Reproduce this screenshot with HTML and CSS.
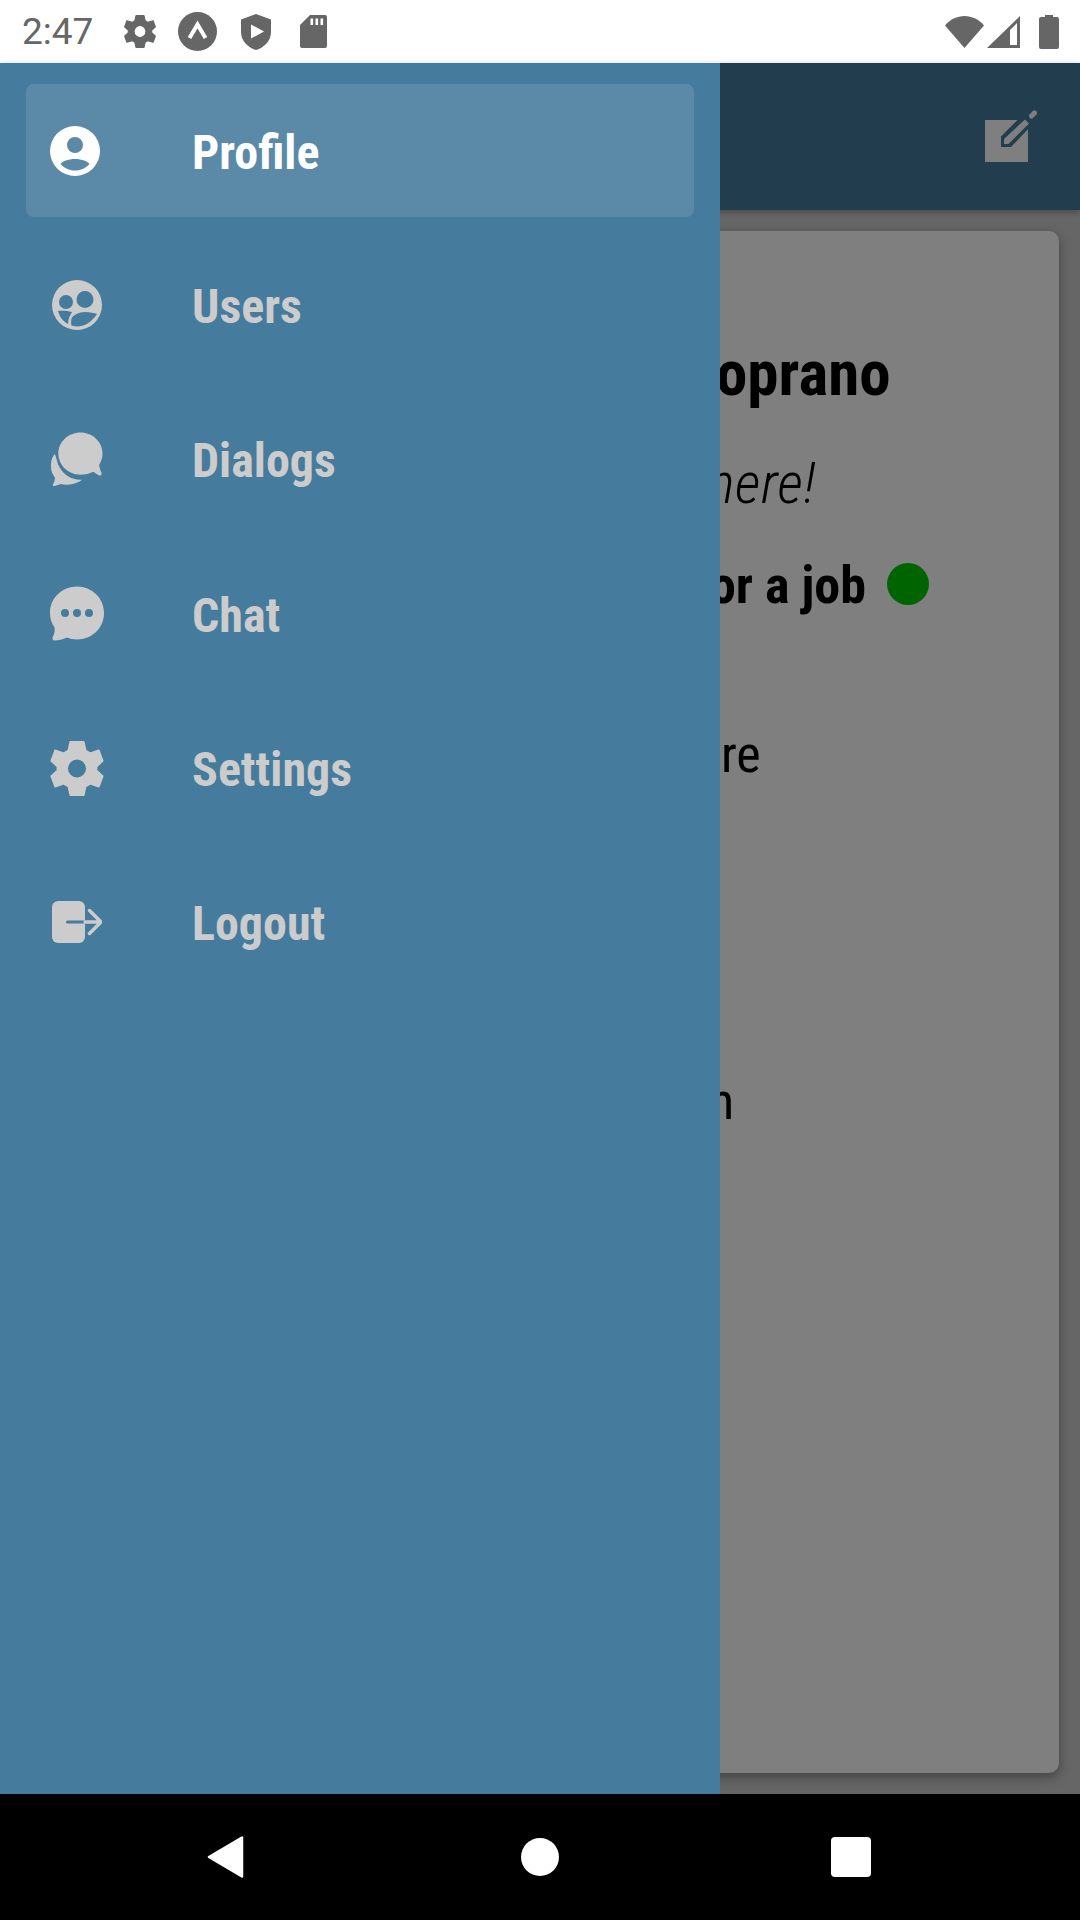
FILE: index.html
```html
<!DOCTYPE html>
<html lang="en">
<head>
<meta charset="utf-8">
<title>Profile</title>
<link rel="stylesheet" href="styles.css">
</head>
<body>
<div class="app">
  <header class="status">
    <span class="time">2:47</span>
    <div class="status-left">
      <svg class="si gear-s" viewBox="-1 -1 56 58"><use href="#gear"/></svg>
      <svg class="si a-s" viewBox="0 0 39 39"><circle cx="19.5" cy="19.5" r="19.5" fill="#666"/><path d="M11.5 26 19.5 12.5 27.5 26" fill="none" stroke="#fff" stroke-width="4"/></svg>
      <svg class="si sh-s" viewBox="0 0 30 36"><path d="M15 0 30 5.500V18C30 27 23 33.500 15 36 7 33.500 0 27 0 18V5.500Z" fill="#666"/><path d="M10 10.500 23 17.500 10 24.500Z" fill="#fff"/></svg>
      <svg class="si sd-s" viewBox="0 0 27 33"><path d="M10 0H25A2 2 0 0 1 27 2V31A2 2 0 0 1 25 33H2A2 2 0 0 1 0 31V10Z" fill="#666"/><path d="M10.500 3.500h2.600v6.500h-2.600zM15.500 3.500h2.600v6.500h-2.600zM20.500 3.500h2.600v6.500h-2.600z" fill="#fff"/></svg>
    </div>
    <div class="status-right">
      <svg class="si wifi-s" viewBox="0 0 39 32"><path d="M19.500 32 0 9.500C5 3.500 12 0 19.500 0S34 3.500 39 9.500Z" fill="#666"/></svg>
      <svg class="si sig-s" viewBox="0 0 33 32"><path fill-rule="evenodd" d="M33 0V32H0ZM30 7 23 14V29H30Z" fill="#666"/></svg>
      <svg class="si bat-s" viewBox="0 0 20 34"><path d="M6 0H14V2H18A2 2 0 0 1 20 4V32A2 2 0 0 1 18 34H2A2 2 0 0 1 0 32V4A2 2 0 0 1 2 2H6Z" fill="#666"/></svg>
    </div>
  </header>

  <main class="main">
    <div class="topbar">
      <svg class="edit" viewBox="0 0 52 52"><path d="M0 9H43V51H0Z" fill="#fff"/><path d="M16 36V25.500L38 3.500 48 13 26 36Z" fill="#457b9d"/><path d="M19 33V28L40 8.500 44 12.500 23.500 33Z" fill="#fff"/><path d="M46.500 5 49.500 2" stroke="#fff" stroke-width="5" stroke-linecap="round"/></svg>
    </div>
    <div class="content">
      <section class="card">
        <h1 class="name">oprano</h1>
        <p class="quote">here!</p>
        <p class="job">or a job <span class="dot"></span></p>
        <p class="line line-a">re</p>
        <p class="line line-b">n</p>
      </section>
    </div>
    <div class="scrim"></div>
    <nav class="drawer">
      <a class="item active">
        <svg class="ico" viewBox="0 0 50 50"><path fill-rule="evenodd" d="M25 0a25 25 0 1 1 0 50 25 25 0 0 1 0-50ZM25 11a8 8 0 1 0 0 16 8 8 0 0 0 0-16ZM25 33C18 33 12 35.500 10.500 38 14 42 19 44.500 25 44.500S36 42 39.500 38C38 35.500 32 33 25 33Z"/></svg>
        <span>Profile</span>
      </a>
      <a class="item">
        <svg class="ico shift" viewBox="0 0 50 50"><path fill-rule="evenodd" d="M25 0a25 25 0 1 1 0 50 25 25 0 0 1 0-50ZM14 15a7 7 0 1 0 0 14 7 7 0 0 0 0-14ZM33 11a8.500 8.500 0 1 0 0 17 8.500 8.500 0 0 0 0-17ZM6 31C8 38 12 42 16 44 16 39 18 35 20 32 16 31 10 30.500 6 31ZM33 32C27 32 21 35 19.500 38.500 19 41 19 44 19.500 45.500 27 48 37 46 45 34 42 33 38 32 33 32Z"/></svg>
        <span>Users</span>
      </a>
      <a class="item">
        <svg class="ico wide" viewBox="0 0 55 55"><path d="M31 0C43.500 0 53.500 9.500 53.500 21.500 53.500 26 52 30 50 33 50.500 36 51.500 39 52.500 41 53 43.500 51.500 44.500 49.500 43.500L44 40C40 42 36 43 31 43 18.500 43 8.500 33.500 8.500 21.500 8.500 9.500 18.500 0 31 0Z"/><path d="M5 22C1 26 1 32 1 35 1 40 3 43 5 46 5 49 4 51 3 52.500 2.500 54 3.500 55 5 54.500L11 52.500C17 54 26 53 33 48 24 49 13 44 8 32 7 28 6 25 5 22Z"/></svg>
        <span>Dialogs</span>
      </a>
      <a class="item">
        <svg class="ico wide" viewBox="0 0 54 54"><path fill-rule="evenodd" d="M27 0C42 0 54 11.500 54 26.500 54 41.500 42 53 27 53 23.500 53 19.500 52 17 51 13 53 8.500 54 5 54 2.500 54 2 52 3 50 4.500 47 5 44 4.500 41 1.500 37 0 32 0 26.500 0 11.500 12 0 27 0ZM15 22.500a4 4 0 1 0 0 8 4 4 0 0 0 0-8ZM27 22.500a4 4 0 1 0 0 8 4 4 0 0 0 0-8ZM39 22.500a4 4 0 1 0 0 8 4 4 0 0 0 0-8Z"/></svg>
        <span>Chat</span>
      </a>
      <a class="item">
        <svg class="ico wide gear-n" viewBox="-1 -1 56 58"><use href="#gear"/></svg>
        <span>Settings</span>
      </a>
      <a class="item">
        <svg class="ico shift" viewBox="0 0 50 42"><path d="M6 0H27A6 6 0 0 1 33 6V36A6 6 0 0 1 27 42H6A6 6 0 0 1 0 36V6A6 6 0 0 1 6 0Z"/><path d="M15.500 21H33" stroke="#457b9d" stroke-width="3" stroke-linecap="round"/><path d="M33 21H48M37.500 9.500 49 21 37.500 32.500" fill="none" stroke="currentColor" stroke-width="3.500" stroke-linecap="round"/></svg>
        <span>Logout</span>
      </a>
    </nav>
  </main>

  <footer class="navbar">
    <svg class="back" viewBox="0 0 37 42"><path d="M35 1.500V40.500L2 21Z" fill="#fff" stroke="#fff" stroke-width="2.500" stroke-linejoin="round"/></svg>
    <span class="home"></span>
    <span class="recent"></span>
  </footer>
</div>
<svg class="defs" width="0" height="0"><defs>
<path id="gear" fill-rule="evenodd" d="M20 0H34L36 9 41 12 50 9 54 20 47.500 26V30L54 36 50 47 41 44 36 47 34 56H20L18 47 13 44 4 47 0 36 6.500 30V26L0 20 4 9 13 12 18 9ZM27 17.500a10.500 10.500 0 1 0 0 21 10.500 10.500 0 0 0 0-21Z"/>
</defs></svg>
</body>
</html>
```
FILE: styles.css
```css
* { box-sizing: border-box; }
html, body { margin: 0; padding: 0; }
body { font-family: Roboto, "Liberation Sans", sans-serif; background: #000; }
.defs { display: block; position: absolute; }
.app { width: 1080px; height: 1920px; display: flex; flex-direction: column; overflow: hidden; }

.status { height: 63px; flex: none; background: #fff; display: flex; align-items: center; padding: 0 21px 0 22px; color: #666; }
.time { font-size: 37px; width: 102px; line-height: 1; margin-top: -1px; }
.status-left { display: flex; align-items: center; gap: 22px; }
.status-right { margin-left: auto; display: flex; align-items: center; }
.si { display: block; }
.gear-s { width: 32px; height: 33px; fill: #666; stroke: #666; stroke-width: 2; stroke-linejoin: round; }
.a-s { width: 39px; height: 39px; }
.sh-s { width: 30px; height: 36px; margin-left: 2px; }
.sd-s { width: 27px; height: 33px; margin-left: 7px; }
.wifi-s { width: 39px; height: 32px; }
.sig-s { width: 33px; height: 32px; margin-left: 3px; }
.bat-s { width: 20px; height: 34px; margin-left: 19px; }

.main { flex: 1; position: relative; display: flex; flex-direction: column; background: #ccc; }
.topbar { height: 147px; flex: none; background: #457b9d; display: flex; justify-content: flex-end; align-items: flex-start; padding: 48px 43px 0 0; box-shadow: 0 2px 6px rgba(0,0,0,.3); position: relative; z-index: 1; }
.edit { width: 52px; height: 52px; overflow: visible; }
.content { flex: 1; padding: 21px 21px 21px 23px; display: flex; }
.card { flex: 1; background: #fff; border-radius: 10px; box-shadow: 0 4px 12px rgba(0,0,0,.35); padding: 0 0 0 697px; color: #000; }
.card p, .card h1 { margin: 0; font-stretch: 75%; white-space: nowrap; }
.name { font-size: 63px; font-weight: 700; line-height: 68px; margin: 109px 0 0 -4px !important; }
.quote { font-size: 57px; font-style: italic; font-weight: 300; letter-spacing: .5px; line-height: 64px; margin: 44px 0 0 -12px !important; }
.job { font-size: 52px; font-weight: 700; line-height: 60px; margin: 40px 0 0 -10px !important; display: flex; align-items: center; gap: 21px; }
.dot { width: 42px; height: 42px; border-radius: 50%; background: #00c800; flex: none; margin-top: -4px; }
.line { font-size: 52px; line-height: 60px; }
.line-a { margin: 109px 0 0 1px !important; }
.line-b { margin: 287px 0 0 -11px !important; }

.scrim { position: absolute; inset: 0; background: rgba(0,0,0,.5); z-index: 2; }
.drawer { position: absolute; left: 0; top: 0; bottom: 0; width: 720px; background: #457b9d; z-index: 3; padding: 21px 26px; display: flex; flex-direction: column; gap: 21.400px; }
.item { height: 133px; flex: none; display: flex; align-items: center; border-radius: 8px; padding-left: 24px; color: #ccc; font-size: 48px; font-weight: 700; font-stretch: 75%; }
.item.active { background: #5b8aa9; color: #fff; }
.ico { width: 50px; height: 50px; flex: none; margin-right: 92px; fill: currentColor; }
.ico.shift { margin-left: 2px; margin-right: 90px; }
.ico.wide { width: 54px; height: 55px; margin-right: 88px; }
.gear-n { stroke: currentColor; stroke-width: 2; stroke-linejoin: round; }
.item span { display: block; margin-top: 3px; }

.navbar { height: 126px; flex: none; background: #000; display: flex; align-items: center; position: relative; padding-left: 207px; }
.back { width: 37px; height: 42px; flex: none; }
.home { width: 38px; height: 38px; border-radius: 50%; background: #fff; margin-left: 277px; flex: none; }
.recent { width: 40px; height: 40px; border-radius: 4px; background: #fff; margin-left: 272px; flex: none; }
```
